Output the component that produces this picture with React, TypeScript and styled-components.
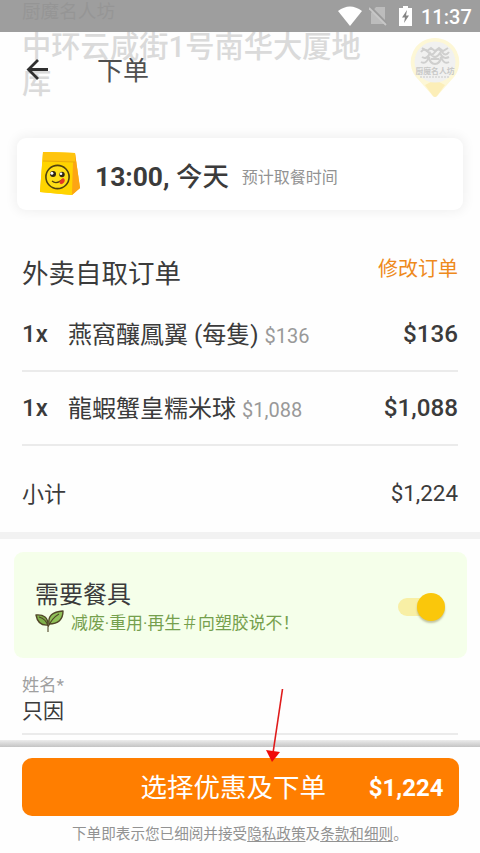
import React from "react";
import styled, { createGlobalStyle } from "styled-components";

const GlobalStyle = createGlobalStyle`
  * { box-sizing: border-box; }
  body {
    margin: 0;
    background: #fefefe;
    color: #3b3b3b;
    font-family: Roboto, "Noto Sans CJK SC", sans-serif;
  }
`;

const Screen = styled.div`
  width: 480px;
  height: 853px;
  display: flex;
  flex-direction: column;
  overflow: hidden;
  position: relative;
`;

const Top = styled.header`
  position: relative;
  height: 108px;
  flex: none;
`;

const Venue = styled.div`
  position: absolute;
  inset: 0;
  padding: 0 22px;
  color: #dadada;
`;

const VenueName = styled.div`
  font-size: 18.6px;
  line-height: 24px;
  height: 29px;
`;

const VenueAddress = styled.div`
  width: 360px;
  font-size: 29.3px;
  line-height: 36px;
  font-weight: 500;
`;

const VenuePin = styled.svg`
  position: absolute;
  left: 408px;
  top: 34px;
`;

const StatusBar = styled.div`
  position: relative;
  height: 32px;
  padding-right: 11px;
  display: flex;
  align-items: center;
  justify-content: flex-end;
  background: rgba(128, 128, 128, 0.76);
  color: #fff;
  font-size: 20px;
  font-weight: 500;
`;

const StatusIcon = styled.svg<{ $gap: number }>`
  margin-right: ${(p) => p.$gap}px;
`;

const StatusTime = styled.span`
  width: 48px;
  padding-top: 1px;
  white-space: nowrap;
`;

const Toolbar = styled.div`
  position: relative;
  display: flex;
  align-items: center;
  height: 76px;
  padding-left: 26px;
`;

const ToolbarTitle = styled.h1`
  margin: 2px 0 0 49px;
  font-size: 26px;
  font-weight: 400;
  line-height: 32px;
  color: #505050;
`;

const PickupCard = styled.section`
  display: flex;
  align-items: center;
  flex: none;
  height: 72px;
  margin: 30px 17px 0;
  padding-left: 21px;
  border-radius: 9px;
  background: #fff;
  box-shadow: 0 0 12px 2px rgba(0, 0, 0, 0.06);
`;

const BagIcon = styled.svg`
  margin-bottom: 7px;
`;

const PickupTime = styled.strong`
  margin: 6px 0 0 11px;
  font-size: 26.4px;
  font-weight: 700;
  line-height: 32px;
  white-space: nowrap;
`;

const PickupDay = styled.span`
  font-weight: 500;
`;

const PickupHint = styled.span`
  margin: 3px 0 0 13px;
  font-size: 16px;
  color: #929292;
`;

const Order = styled.section`
  flex: none;
  height: 329px;
  padding: 37px 22px 0;
  border-bottom: 7px solid #f2f2f2;
`;

const OrderHeader = styled.div`
  display: flex;
  justify-content: space-between;
  height: 50px;
`;

const OrderTitle = styled.h2`
  margin: 0;
  padding-top: 11px;
  font-size: 26.5px;
  font-weight: 400;
  line-height: 32px;
`;

const EditLink = styled.a`
  padding-top: 10px;
  font-size: 20px;
  line-height: 25px;
  color: #ee8a1c;
`;

const ItemRow = styled.div<{ $height: number }>`
  display: flex;
  align-items: center;
  height: ${(p) => p.$height}px;
  border-bottom: 2px solid #ebebeb;
  font-size: 24px;
  line-height: 30px;
`;

const Quantity = styled.span`
  width: 46px;
  font-weight: 500;
`;

const ItemName = styled.span`
  flex: 1;
  padding-top: 3px;
  white-space: nowrap;
`;

const UnitPrice = styled.small`
  margin-left: 6px;
  font-size: 20px;
  color: #999;
`;

const ItemTotal = styled.span`
  font-size: 24.2px;
  font-weight: 500;
`;

const Subtotal = styled.div`
  display: flex;
  align-items: center;
  justify-content: space-between;
  height: 94px;
  font-size: 22.4px;
`;

const SubtotalLabel = styled.span`
  margin-bottom: 3px;
  font-size: 22px;
`;

const Cutlery = styled.section`
  flex: none;
  display: flex;
  align-items: center;
  justify-content: space-between;
  height: 106px;
  margin: 13px 13px 0 14px;
  padding: 3px 24px 0 21px;
  border-radius: 9px;
  background: #f5ffea;
`;

const CutleryTitle = styled.div`
  padding-top: 2px;
  font-size: 24px;
  line-height: 28px;
`;

const CutleryNote = styled.div`
  display: flex;
  align-items: center;
  height: 25px;
  font-size: 16.9px;
  color: #75a04d;
  white-space: nowrap;
`;

const Slogan = styled.span`
  margin-left: 7px;
`;

const Track = styled.div`
  position: relative;
  width: 45px;
  height: 18px;
  border-radius: 9px;
  background: #f8efa5;
`;

const Thumb = styled.div`
  position: absolute;
  right: -2px;
  top: -5px;
  width: 28px;
  height: 28px;
  border-radius: 50%;
  background: #fac70b;
  box-shadow: 0 2px 2px rgba(100, 90, 30, 0.35);
`;

const NameField = styled.label`
  display: flex;
  flex-direction: column;
  flex: none;
  height: 62px;
  margin: 15px 22px 0;
  border-bottom: 2px solid #ebebeb;
`;

const FieldLabel = styled.span`
  font-size: 17.3px;
  line-height: 25px;
  color: #a0a0a0;
`;

const FieldValue = styled.span`
  font-size: 21px;
  line-height: 26px;
`;

const FooterShade = styled.div`
  flex: none;
  height: 7px;
  margin-top: 5px;
  background: linear-gradient(#ececec, #c4c4c4);
`;

const Footer = styled.footer`
  flex: 1;
  padding: 11px 21.5px 0;
  background: #fefefe;
`;

const CheckoutButton = styled.button`
  display: grid;
  grid-template-columns: 1fr auto;
  align-items: center;
  width: 100%;
  height: 58px;
  padding: 2px 15px 0 119px;
  border: 0;
  border-radius: 10px;
  background: #ff7e00;
  color: #fff;
  font-family: inherit;
  font-size: 26.5px;
  line-height: 32px;
  text-align: left;
`;

const CheckoutTotal = styled.span`
  font-size: 24px;
  font-weight: 700;
`;

const Terms = styled.p`
  margin: 7px 0 0 50.5px;
  font-size: 14.6px;
  line-height: 22px;
  color: #929292;
  white-space: nowrap;
`;

const TermsLink = styled.a`
  text-decoration: underline;
  text-underline-offset: 2px;
`;

const Pointer = styled.svg`
  position: absolute;
  left: 262px;
  top: 686px;
`;

const items = [
  { name: "燕窩釀鳳翼 (每隻)", unit: "$136", total: "$136", height: 75 },
  { name: "龍蝦蟹皇糯米球", unit: "$1,088", total: "$1,088", height: 74 },
];

function PaperBag() {
  return (
    <BagIcon width="46" height="48" viewBox="0 0 46 48">
      <path d="M5 5 L37 6 L42 41 L34 48 L2 45Z" fill="#ffc20d" />
      <path d="M5 5 L37 6 L35 16 L34 48 L2 45Z" fill="#ffd400" />
      <path d="M37 6 L42 41 L34 48 L35 16Z" fill="#fda514" />
      <path d="M5 5 L37 6 L37 15 L5 14Z" fill="#ffc40d" />
      <path d="M5 14 L37 15" stroke="#e9ad09" strokeWidth="1" />
      <circle cx="19.5" cy="30" r="11.6" fill="#ffdf16" stroke="#50420f" strokeWidth="1.6" />
      <circle cx="15" cy="27" r="3" fill="#302713" />
      <circle cx="24" cy="27.5" r="2.7" fill="#302713" />
      <circle cx="13.9" cy="26.3" r="1.5" fill="#fff" />
      <circle cx="23" cy="26.8" r="1.3" fill="#fff" />
      <path d="M14 34 Q18 37.5 24 33" fill="none" stroke="#50420f" strokeWidth="1.2" />
      <path d="M21.5 34 L25 31 Q28 32.5 26 35.5 Q23 38.5 21.5 36Z" fill="#e43a25" />
    </BagIcon>
  );
}

function Leaves() {
  return (
    <svg width="29" height="24" viewBox="0 0 29 24" stroke="#514828" strokeWidth="1.4" strokeLinejoin="round">
      <path d="M13 15 Q3 16 1 5 Q13 4 13 15Z" fill="#7fb04a" />
      <path d="M14 14 Q12 2 28 1 Q28 14 14 14Z" fill="#8fc158" />
      <path d="M4 7 Q11 9 13 16 V22 M13 17 Q17 8 24 4" fill="none" strokeWidth="1.1" />
    </svg>
  );
}

function RestaurantPin() {
  return (
    <VenuePin width="54" height="66" viewBox="0 0 54 66">
      <path d="M27 4 A24 24 0 0 1 46 43 L30 61 Q27 65 24 61 L8 43 A24 24 0 0 1 27 4Z" fill="#fdf7d6" />
      <path d="M17 51 L27 46 L37 51 L29 62 Q27 64 25 62Z" fill="#fceeb8" />
      <circle cx="27" cy="28" r="20.5" fill="#f1f1f0" />
      <g fill="none" stroke="#cfcfce" strokeWidth="2">
        <path d="M13 18 q3.5 -5 7 0 t7 0 t7 0 t7 0 M14 23 q5 3 8 -4 q5 8 10 0 q3 7 9 4 M13 28 q5 3 8 -5 q1 7 6 7 q5 0 6 -7 q3 8 8 5" />
        <path d="M14 14 l5 3 l4 -3 l4 3 l4 -3 l4 3 l5 -3 M23 25 h8" />
      </g>
      <text x="27" y="40" textAnchor="middle" fontSize="7.8" fontWeight="700" fill="#c8c8c7" fontFamily="Noto Sans CJK SC">
        厨魔名人坊
      </text>
      <path d="M12 43 H42" stroke="#d6d6d5" strokeWidth="1.6" strokeDasharray="2 1" />
    </VenuePin>
  );
}

export default function App() {
  return (
    <Screen>
      <GlobalStyle />
      <Top>
        <Venue>
          <VenueName>厨魔名人坊</VenueName>
          <VenueAddress>中环云咸街1号南华大厦地库</VenueAddress>
          <RestaurantPin />
        </Venue>
        <StatusBar>
          <StatusIcon $gap={7} width="24" height="20" viewBox="0 0 24 20">
            <path d="M0 5 Q12 -4 24 5 L12 20Z" fill="#fff" />
          </StatusIcon>
          <StatusIcon $gap={12} width="18" height="20" viewBox="0 0 18 20">
            <path d="M7 1 H16 V18 H2 V7Z" fill="#bcbcbc" />
            <path d="M1 1 L18 18" stroke="#9b9b9b" strokeWidth="3" />
            <path d="M0 2 L17 19" stroke="#c7c7c7" strokeWidth="1.8" />
          </StatusIcon>
          <StatusIcon $gap={9} width="13" height="20" viewBox="0 0 13 20">
            <path d="M4 0 H9 V2 H13 V20 H0 V2 H4Z" fill="#fff" />
            <path d="M8 4 L3 11.5 H6 L5 17 L10 9.5 H7Z" fill="#858585" />
          </StatusIcon>
          <StatusTime>11:37</StatusTime>
        </StatusBar>
        <Toolbar>
          <svg width="22" height="22" viewBox="0 0 22 22" fill="none" stroke="#303030" strokeWidth="2.8">
            <path d="M22 10.5 H3 M12 1 L2.5 10.5 L12 20" />
          </svg>
          <ToolbarTitle>下单</ToolbarTitle>
        </Toolbar>
      </Top>

      <PickupCard>
        <PaperBag />
        <PickupTime>
          13:00, <PickupDay>今天</PickupDay>
        </PickupTime>
        <PickupHint>预计取餐时间</PickupHint>
      </PickupCard>

      <Order>
        <OrderHeader>
          <OrderTitle>外卖自取订单</OrderTitle>
          <EditLink>修改订单</EditLink>
        </OrderHeader>
        {items.map((item) => (
          <ItemRow key={item.name} $height={item.height}>
            <Quantity>1x</Quantity>
            <ItemName>
              {item.name}
              <UnitPrice>{item.unit}</UnitPrice>
            </ItemName>
            <ItemTotal>{item.total}</ItemTotal>
          </ItemRow>
        ))}
        <Subtotal>
          <SubtotalLabel>小计</SubtotalLabel>
          <span>$1,224</span>
        </Subtotal>
      </Order>

      <Cutlery>
        <div>
          <CutleryTitle>需要餐具</CutleryTitle>
          <CutleryNote>
            <Leaves />
            <Slogan>减废·重用·再生＃向塑胶说不！</Slogan>
          </CutleryNote>
        </div>
        <Track>
          <Thumb />
        </Track>
      </Cutlery>

      <NameField>
        <FieldLabel>姓名*</FieldLabel>
        <FieldValue>只因</FieldValue>
      </NameField>

      <FooterShade />
      <Footer>
        <CheckoutButton>
          <span>选择优惠及下单</span>
          <CheckoutTotal>$1,224</CheckoutTotal>
        </CheckoutButton>
        <Terms>
          下单即表示您已细阅并接受<TermsLink>隐私政策</TermsLink>及<TermsLink>条款和细则</TermsLink>。
        </Terms>
      </Footer>

      <Pointer width="26" height="78" viewBox="0 0 26 78">
        <path d="M20.5 3 L11 67" stroke="#df1b1b" strokeWidth="1.6" />
        <path d="M4 64 L18 66 L10 76Z" fill="#f00b0b" />
      </Pointer>
    </Screen>
  );
}
